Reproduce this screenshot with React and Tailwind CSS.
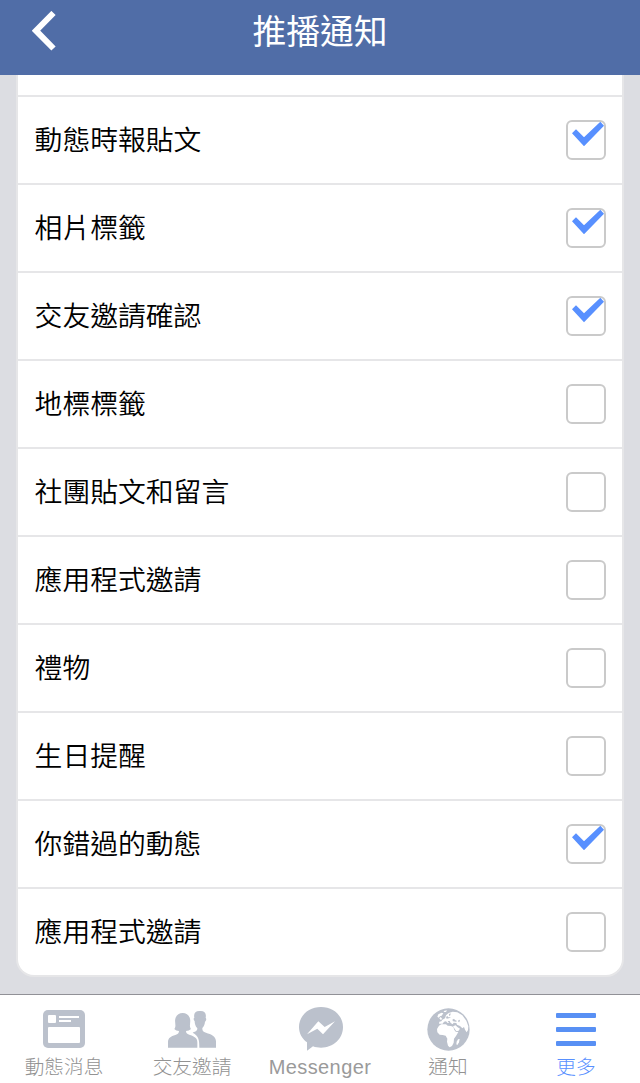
import React, { useState } from 'react';

const initialOptions = [
    { id: 1, label: '動態時報貼文', checked: true },
    { id: 2, label: '相片標籤', checked: true },
    { id: 3, label: '交友邀請確認', checked: true },
    { id: 4, label: '地標標籤', checked: false },
    { id: 5, label: '社團貼文和留言', checked: false },
    { id: 6, label: '應用程式邀請', checked: false },
    { id: 7, label: '禮物', checked: false },
    { id: 8, label: '生日提醒', checked: false },
    { id: 9, label: '你錯過的動態', checked: true },
    { id: 10, label: '應用程式邀請', checked: false },
];

function FeedIcon() {
    return (
        <svg width="42" height="38" viewBox="0 0 42 38">
            <rect width="42" height="38" rx="5" fill="#bbc1cc" />
            <rect x="5" y="5" width="8" height="8" rx="1" fill="#fff" />
            <rect x="16" y="6" width="20" height="2" fill="#fff" />
            <rect x="16" y="10" width="12" height="2" fill="#fff" />
            <rect x="5" y="17" width="32" height="16" rx="1" fill="#fff" />
        </svg>
    );
}

function FriendsIcon() {
    return (
        <svg width="48" height="38" viewBox="0 0 144 114" fill="#bbc1cc">
            <path d="M74 68 C85 64 88 62 88 55 C82 49 80 41 80 34 C76 30 76 25 79 23 C76 9 83 2 96 3 C109 2 116 9 113 23 C116 26 115 32 111 35 C110 43 108 49 103 54 C103 62 105 65 114 68 C130 73 143 78 144 94 L144 113 L94 113 C94 91 93 78 74 68 Z" />
            <path d="M0 113 L0 97 C0 83 9 79 22 75 C30 72 33 69 33 63 C28 63 22 60 19 57 C26 47 19 38 22 26 C25 14 34 9 44 9 C54 9 63 14 66 26 C69 38 62 47 69 57 C65 60 60 63 54 63 C54 70 58 72 66 75 C80 80 88 84 88 97 L88 113 Z" />
        </svg>
    );
}

function MessengerIcon() {
    return (
        <svg className="ml-0.5" width="44" height="44" viewBox="0 0 132 132">
            <path d="M66 0 C103 0 132 26 132 60 C132 95 103 122 66 122 C58 122 49 121 42 118 L24 131 L24 106 C9 95 0 79 0 60 C0 26 29 0 66 0 Z" fill="#bbc1cc" />
            <path d="M24 82 L58 43 L77 60 L108 43 L72 82 L55 65 Z" fill="#fff" />
        </svg>
    );
}

function GlobeIcon() {
    return (
        <svg width="43" height="43" viewBox="0 0 129 129">
            <circle cx="64.5" cy="64.5" r="63.5" fill="#bbc1cc" />
            <g fill="#fff">
                <path d="M36 53 L43 49 L57 49 L62 53 L72 54 L79 57 L82 66 L87 72 L94 72 L87 84 L81 92 L80 104 L75 114 L68 118 L63 113 L60 101 L61 92 L56 83 L47 81 L38 80 L31 73 L30 63 Z" />
                <path d="M78 55 L86 52 L91 57 L99 62 L94 69 L88 70 Z" />
                <path d="M36 47 L37 41 L43 40 L46 35 L54 31 L57 22 L65 15 L77 11 L91 13 L106 22 L118 38 L124 55 L123 66 L119 73 L114 65 L111 57 L106 61 L99 54 L90 50 L88 45 L80 44 L77 49 L71 45 L68 39 L62 39 L66 45 L62 45 L57 40 L51 41 L47 47 Z" />
                <path d="M34 19 L44 14 L49 16 L44 23 L39 25 L35 29 L31 26 Z" />
                <path d="M50 9 L60 7 L57 12 L51 12 Z" />
                <path d="M37 31 L41 27 L46 33 L41 36 Z" />
                <path d="M93 94 L98 93 L96 103 L91 111 L88 109 L89 101 Z" />
            </g>
            <g fill="#bbc1cc">
                <path d="M76 35 L81 32 L84 36 L90 39 L87 41 L78 40 Z" />
                <path d="M94 37 L99 35 L97 43 L94 42 Z" />
                <path d="M57 27 L61 24 L64 28 L72 27 L66 31 L59 32 Z" />
                <path d="M66 18 L71 16 L70 22 L66 24 Z" />
            </g>
        </svg>
    );
}

function MoreIcon() {
    return (
        <svg width="40" height="33" viewBox="0 0 40 33" fill="#5890f4">
            <rect width="40" height="5" rx="1" />
            <rect y="14" width="40" height="5" rx="1" />
            <rect y="28" width="40" height="5" rx="1" />
        </svg>
    );
}

const tabs = [
    { id: 'feed', label: '動態消息', icon: <FeedIcon /> },
    { id: 'friends', label: '交友邀請', icon: <FriendsIcon /> },
    { id: 'messenger', label: 'Messenger', icon: <MessengerIcon /> },
    { id: 'notifications', label: '通知', icon: <GlobeIcon /> },
    { id: 'more', label: '更多', icon: <MoreIcon />, active: true },
];

function Checkbox({ checked }) {
    return (
        <span className="block w-10 h-10 shrink-0 rounded-md border-2 border-[#cacaca] bg-white">
            {checked && (
                <svg className="-m-0.5 max-w-none" width="40" height="40" viewBox="0 0 120 120">
                    <path d="M18 40 L30 28 L54 52 L103 5 L114 17 L54 79 Z" fill="#5890ff" />
                </svg>
            )}
        </span>
    );
}

function App() {
    const [options, setOptions] = useState(initialOptions);

    const toggleOption = (id) => {
        setOptions(options.map((o) => (o.id === id ? { ...o, checked: !o.checked } : o)));
    };

    return (
        <div className="flex flex-col w-[640px] h-[1083px] overflow-hidden bg-[#dcdde2] font-['Liberation_Sans','Noto_Sans_CJK_TC',sans-serif]">
            <header className="grid grid-cols-[88px_1fr_88px] h-[75px] shrink-0 bg-[#506da7] text-white">
                <button type="button" className="pl-8 pt-[11px] self-start">
                    <svg width="24" height="40" viewBox="0 0 24 40" fill="none" stroke="#fff" strokeWidth="6">
                        <path d="M21.5 2 L4 19.7 L21.5 37.5" />
                    </svg>
                </button>
                <h1 className="text-center text-[33.8px] leading-[65px] font-normal">推播通知</h1>
            </header>

            <main className="flex-1 px-4">
                <div className="h-[902px] rounded-b-[18px] border-2 border-t-0 border-[#e6e6e8] bg-white overflow-hidden">
                    <div className="h-5" />
                    {options.map((option) => (
                        <button
                            key={option.id}
                            type="button"
                            onClick={() => toggleOption(option.id)}
                            className="flex items-center justify-between w-full h-[88px] border-t-2 border-[#e6e6e8] pl-[16.6px] pr-4"
                        >
                            <span className="pt-0.5 text-[27.8px] leading-10 font-[350] text-black">{option.label}</span>
                            <Checkbox checked={option.checked} />
                        </button>
                    ))}
                </div>
            </main>

            <nav className="grid grid-cols-5 h-[89px] shrink-0 border-t border-[#919197] bg-white">
                {tabs.map((tab) => (
                    <button key={tab.id} type="button" className="flex flex-col items-center pt-[11px]">
                        <span className="flex items-center justify-center h-[46px]">{tab.icon}</span>
                        <span
                            className={
                                tab.active
                                    ? 'text-[19.7px] leading-[30px] font-light text-[#5890ff]'
                                    : tab.id === 'messenger'
                                      ? 'text-[20px] leading-[30px] tracking-[0.4px] text-[#9a9a9a]'
                                      : 'text-[19.7px] leading-[30px] font-light text-[#929292]'
                            }
                        >
                            {tab.label}
                        </span>
                    </button>
                ))}
            </nav>
        </div>
    );
}

export default App;
